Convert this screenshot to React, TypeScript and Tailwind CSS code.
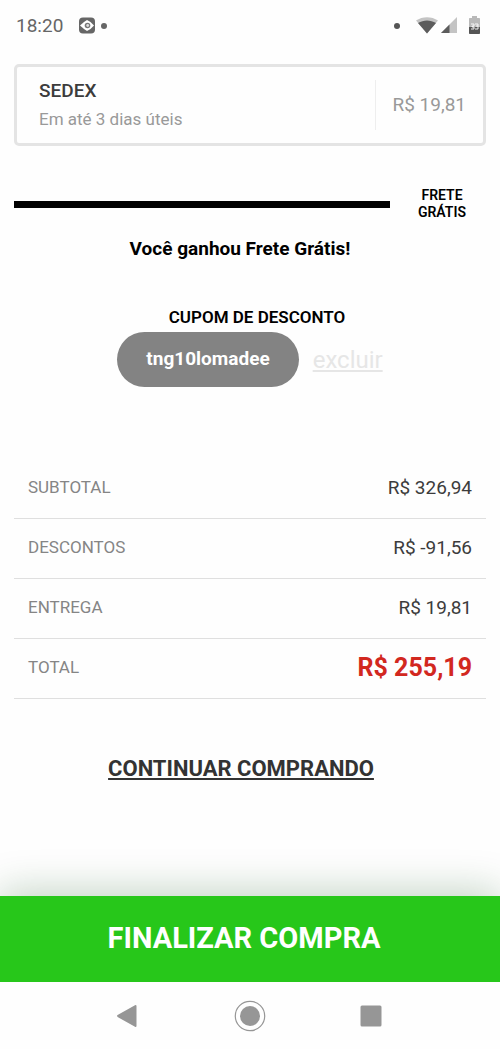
const summary = [
  { label: 'SUBTOTAL', value: 'R$ 326,94' },
  { label: 'DESCONTOS', value: 'R$ -91,56' },
  { label: 'ENTREGA', value: 'R$ 19,81' },
  { label: 'TOTAL', value: 'R$ 255,19', highlight: true },
];

function StatusBar() {
  return (
    <div className="flex h-[52px] items-center justify-between pl-4 pr-5 text-[#666]">
      <div className="flex items-center">
        <span className="text-[19px] leading-6">18:20</span>
        <svg className="ml-[15px]" width="18" height="18" viewBox="0 0 18 18" aria-hidden="true">
          <rect x="1" y="0.5" width="16" height="16" rx="4" fill="#666" />
          <path d="M2 8.5l4-3.5L9 3l3.5 2L16 8.5L12.500 12L9 14l-3-2z" fill="#fff" />
          <circle cx="9.5" cy="8.5" r="2.8" fill="#777" />
          <circle cx="9.7" cy="8.5" r="1.4" fill="#ddd" />
        </svg>
        <span className="ml-[5px] size-[6px] rounded-full bg-[#666]" />
      </div>
      <div className="flex items-center">
        <span className="mr-4 size-[6px] rounded-full bg-[#555]" />
        <svg className="mr-[3px]" width="22" height="18" viewBox="0 0 22 18" aria-hidden="true">
          <path d="M0 3.5C6.5 -1 15.5 -1 22 3.5L11 16.5z" fill="#c4c4c4" />
          <path d="M2 6C7.5 2.5 14.5 2.5 20 6L11 16.5z" fill="#5c5c5c" />
        </svg>
        <svg className="mr-3" width="16" height="18" viewBox="0 0 16 18" aria-hidden="true">
          <path d="M0 16L16 0v16z" fill="#c4c4c4" />
          <path d="M0 16L8.5 7.5V16z" fill="#5c5c5c" />
        </svg>
        <svg width="11" height="20" viewBox="0 0 11 20" aria-hidden="true">
          <path d="M3 0h5v2h2.2q.8 0 .8.8V11H0V2.8Q0 2 .8 2H3z" fill="#b9b9b9" />
          <path d="M0 11h11v6.2q0 .8-.8.8H.8q-.8 0-.8-.8z" fill="#555" />
          <path d="M2 8h3v2H3v1h2v2H2M6 8h3v5H6M7 10h2" fill="none" stroke="#fff" strokeWidth=".9" />
        </svg>
      </div>
    </div>
  );
}

function NavigationBar() {
  return (
    <nav className="grid h-[67px] grid-cols-3 items-center justify-items-center px-[67px] text-[#969696]">
      <button aria-label="Voltar">
        <svg width="32" height="32" viewBox="0 0 32 32" fill="currentColor">
          <path d="M6 14.8L23 5.2q1.5-.7 1.5 1v19.6q0 1.7-1.5 1L6 17.2q-2-1.2 0-2.4z" />
        </svg>
      </button>
      <button aria-label="Início">
        <svg width="32" height="32" viewBox="0 0 32 32" fill="currentColor">
          <circle cx="16" cy="16" r="14.7" fill="none" stroke="currentColor" strokeWidth="1.2" />
          <circle cx="16" cy="16" r="10" />
        </svg>
      </button>
      <button aria-label="Recentes">
        <svg width="32" height="32" viewBox="0 0 32 32" fill="currentColor">
          <rect x="4.5" y="5.5" width="21" height="21" rx="1.5" />
        </svg>
      </button>
    </nav>
  );
}

export default function App() {
  return (
    <div className="flex min-h-screen flex-col bg-[#fefefe] font-['Roboto',sans-serif] text-black">
      <StatusBar />
      <main className="flex flex-col px-[14px] pt-3">
        <section className="flex h-[82px] items-center justify-between rounded-[5px] border-[3px] border-[#e4e4e4] pl-[22px] pr-[17px]">
          <div>
            <h2 className="text-[19px] font-medium leading-7 text-[#3c3c3c]">SEDEX</h2>
            <p className="text-[17px] leading-7 text-[#999]">Em até 3 dias úteis</p>
          </div>
          <div className="flex h-[50px] items-center border-l border-[#eee] pl-4 text-[19px] text-[#999]">
            R$ 19,81
          </div>
        </section>

        <section className="mt-[41px]">
          <div className="flex items-center">
            <div className="h-[7px] flex-1 bg-black" />
            <p className="ml-6 mr-4 w-14 text-center text-[14px] font-semibold leading-[17px]">FRETE GRÁTIS</p>
          </div>
          <p className="mt-4 pr-5 text-center text-[19px] font-bold leading-6">
            Você ganhou Frete Grátis!
          </p>
        </section>

        <section className="mt-11">
          <h3 className="pl-[14px] text-center text-[17px] font-semibold leading-6">CUPOM DE DESCONTO</h3>
          <div className="mt-[3px] flex items-center justify-center gap-[14px]">
            <span className="flex h-[55px] items-center rounded-full bg-[#838383] px-[29px] text-[19px] font-bold text-white">
              tng10lomadee
            </span>
            <a href="#excluir" className="text-[24px] leading-7 text-[#e6e6e6] underline">
              excluir
            </a>
          </div>
        </section>

        <table className="mt-[71px] w-full">
          <tbody>
            {summary.map((row) => (
              <tr key={row.label} className="h-[60px] border-b border-[#dfdfdf]">
                <th scope="row" className="pl-[14px] text-left text-[17px] font-normal text-[#858585]">
                  {row.label}
                </th>
                <td
                  className={
                    row.highlight
                      ? 'pr-[14px] text-right text-[25px] font-bold leading-8 text-[#d2281f]'
                      : 'pr-[14px] text-right text-[19px] leading-8 text-[#3c3c3c]'
                  }
                >
                  {row.value}
                </td>
              </tr>
            ))}
          </tbody>
        </table>

        <a
          href="#continuar"
          className="mr-[18px] mt-[54px] text-center text-[22px] font-bold leading-8 text-[#333] underline"
        >
          CONTINUAR COMPRANDO
        </a>
      </main>

      <footer className="mt-auto">
        <button className="h-[86px] w-full bg-[#27c71a] pr-3 text-[29px] font-bold text-white shadow-[0_-4px_40px_rgba(10,80,20,0.26)]">
          FINALIZAR COMPRA
        </button>
        <div className="relative bg-[#fefefe]">
          <NavigationBar />
        </div>
      </footer>
    </div>
  );
}
